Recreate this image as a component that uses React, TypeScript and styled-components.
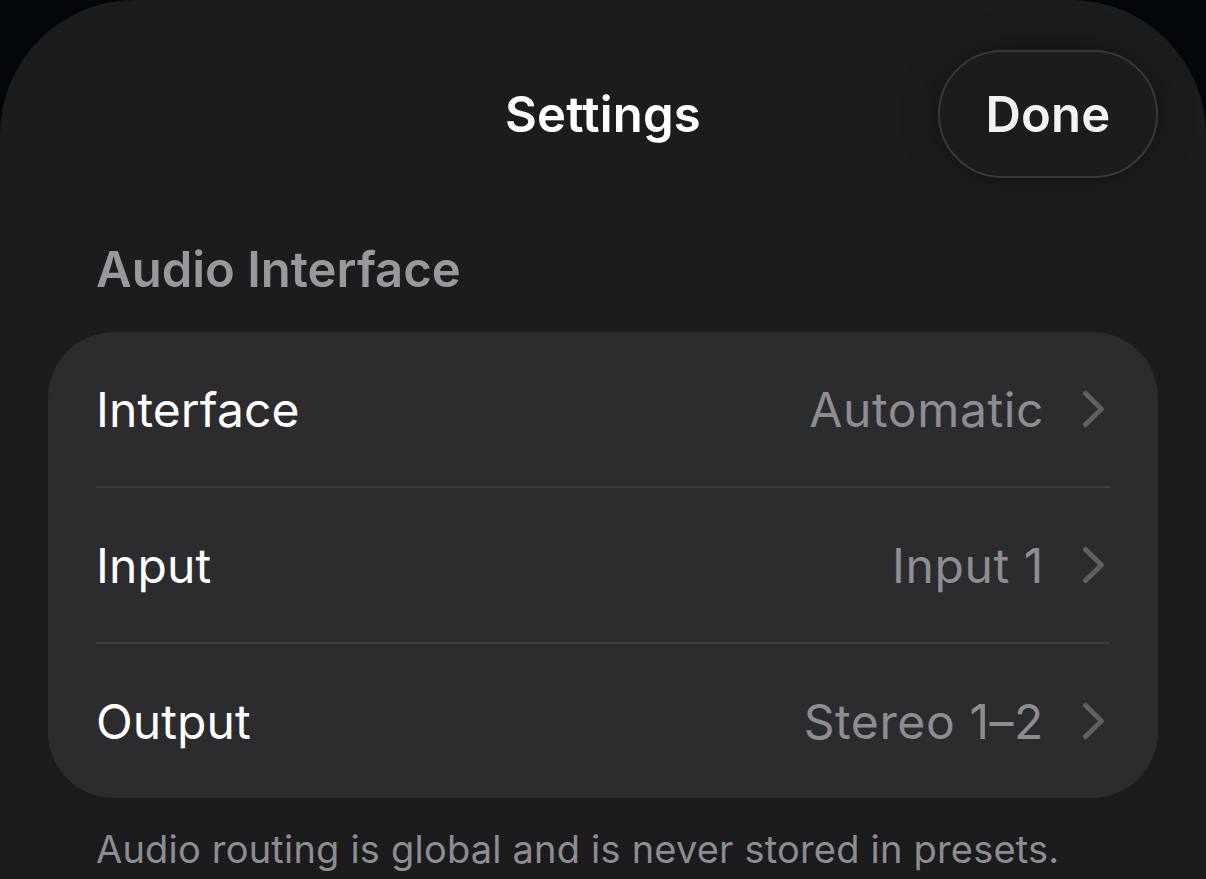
import React from 'react';
import styled, { createGlobalStyle } from 'styled-components';

const GlobalStyle = createGlobalStyle`
  html, body {
    margin: 0;
    padding: 0;
    background: #03060b;
  }
  body {
    font-family: Inter, "Noto Sans", "Liberation Sans", sans-serif;
    -webkit-font-smoothing: antialiased;
  }
`;

const Sheet = styled.div`
  min-height: 879px;
  box-sizing: border-box;
  background: #1c1c1e;
  border-radius: 135px 135px 0 0;
  padding: 50px 48px 0 48px;
  display: flex;
  flex-direction: column;
`;

const Header = styled.header`
  display: grid;
  grid-template-columns: 1fr auto 1fr;
  align-items: center;
  height: 128px;
`;

const Title = styled.h1`
  grid-column: 2;
  margin: 0;
  font-size: 49px;
  font-weight: 600;
  letter-spacing: 0.2px;
  color: #ffffff;
`;

const DoneButton = styled.button`
  grid-column: 3;
  justify-self: end;
  width: 220px;
  height: 128px;
  border-radius: 64px;
  border: 2px solid #38383b;
  background: #1c1c1e;
  box-shadow: 0 0 36px rgba(0, 0, 0, 0.35);
  color: #f2f2f2;
  font-family: inherit;
  font-size: 49px;
  font-weight: 600;
  letter-spacing: 0.2px;
  cursor: pointer;
`;

const SectionTitle = styled.h2`
  margin: 63px 0 0 48px;
  font-size: 49px;
  line-height: 58px;
  font-weight: 600;
  color: #98989e;
`;

const Card = styled.div`
  margin-top: 33px;
  background: #2c2c2e;
  border-radius: 66px;
  display: flex;
  flex-direction: column;
`;

const Row = styled.div`
  height: 154px;
  display: flex;
  align-items: center;
  padding: 0 52px 0 48px;
`;

const Separator = styled.div`
  height: 2px;
  margin: 0 48px;
  background: #3d3d40;
`;

const Label = styled.span`
  flex: 1;
  font-size: 48px;
  color: #ffffff;
  letter-spacing: 0.1px;
`;

const Value = styled.span`
  font-size: 48px;
  color: #8d8d92;
  letter-spacing: 0.6px;
  margin-right: 38px;
`;

const Footer = styled.p`
  margin: 28px 0 0 48px;
  font-size: 38px;
  line-height: 46px;
  letter-spacing: 0.2px;
  color: #8d8d92;
`;

const Chevron = () => (
  <svg width="24" height="38" viewBox="0 0 24 38" fill="none">
    <path d="M3.5 3.5 L19.5 19 L3.5 34.5" stroke="#5f5f64" strokeWidth="5" strokeLinecap="round" strokeLinejoin="round" />
  </svg>
);

const rows = [
  { label: 'Interface', value: 'Automatic' },
  { label: 'Input', value: 'Input 1' },
  { label: 'Output', value: 'Stereo 1–2' },
];

export default function App() {
  return (
    <>
      <GlobalStyle />
      <Sheet>
        <Header>
          <Title>Settings</Title>
          <DoneButton>Done</DoneButton>
        </Header>
        <SectionTitle>Audio Interface</SectionTitle>
        <Card>
          {rows.map((r, i) => (
            <React.Fragment key={r.label}>
              {i > 0 && <Separator />}
              <Row>
                <Label>{r.label}</Label>
                <Value>{r.value}</Value>
                <Chevron />
              </Row>
            </React.Fragment>
          ))}
        </Card>
        <Footer>Audio routing is global and is never stored in presets.</Footer>
      </Sheet>
    </>
  );
}
